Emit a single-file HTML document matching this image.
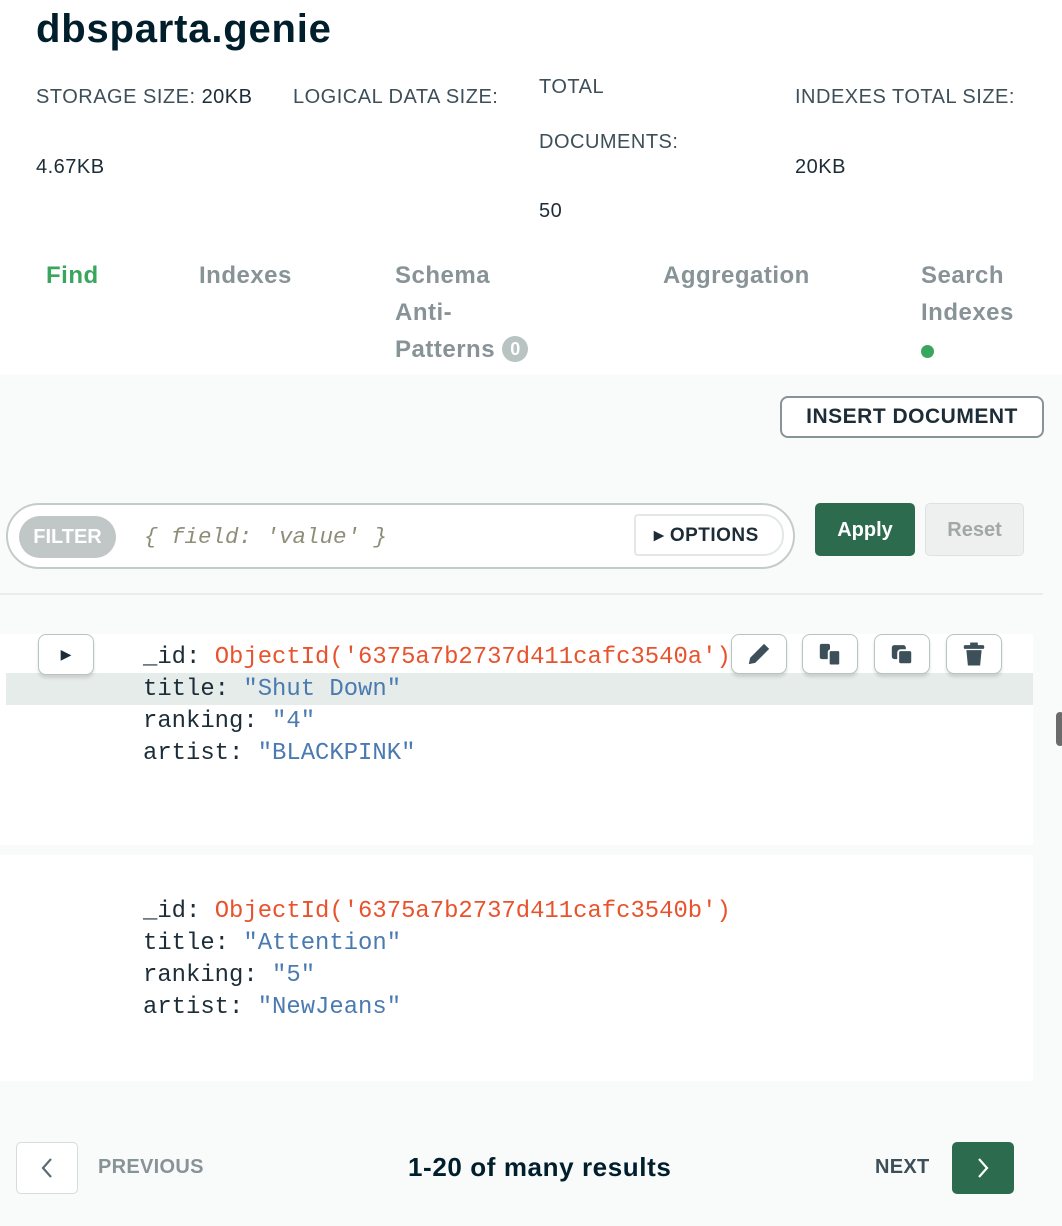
<!DOCTYPE html>
<html><head><style>
*{margin:0;padding:0;box-sizing:border-box}
body{width:1062px;height:1226px;background:#f9fbfa;font-family:"Liberation Sans",sans-serif;position:relative;overflow:hidden}
.a{position:absolute}
.top{left:0;top:0;width:1062px;height:375px;background:#fff}
.st{font-size:20px;color:#3d4f58;letter-spacing:0.5px}
.tab{font-size:24px;font-weight:bold;color:#889397;line-height:37px;letter-spacing:0.5px}
.mono{font-family:"Liberation Mono",monospace;font-size:23.9px;line-height:32px;color:#1c2d38;white-space:pre}
.o{color:#e8532d}.s{color:#4a7ab0}
.ib{width:56px;height:40px;border:1.5px solid #b8c4c2;border-radius:8px;background:#fff;box-shadow:0 3px 3px rgba(0,0,0,.12);display:flex;align-items:center;justify-content:center}
</style></head><body>
<div class="a top"></div>
<div class="a" style="left:36px;top:7px;font-size:40px;font-weight:bold;color:#001e2b;letter-spacing:0.8px">dbsparta.genie</div>
<div class="a st" style="left:36px;top:86px">STORAGE SIZE: <span style="color:#1c2d38">20KB</span></div>
<div class="a st" style="left:293px;top:86px">LOGICAL DATA SIZE:</div>
<div class="a st" style="left:36px;top:156px;color:#1c2d38">4.67KB</div>
<div class="a st" style="left:539px;top:76px">TOTAL</div>
<div class="a st" style="left:539px;top:131px">DOCUMENTS:</div>
<div class="a st" style="left:539px;top:200px;color:#1c2d38">50</div>
<div class="a st" style="left:795px;top:86px">INDEXES TOTAL SIZE:</div>
<div class="a st" style="left:795px;top:156px;color:#1c2d38">20KB</div>
<div class="a tab" style="left:46px;top:257px;color:#3aa55d">Find</div>
<div class="a tab" style="left:199px;top:257px">Indexes</div>
<div class="a tab" style="left:395px;top:257px">Schema<br>Anti-<br>Patterns <span style="display:inline-block;background:#b8c4c2;color:#fff;border-radius:14px;font-size:18px;line-height:26px;padding:0 8px;vertical-align:2px;letter-spacing:0">0</span></div>
<div class="a tab" style="left:663px;top:257px">Aggregation</div>
<div class="a tab" style="left:921px;top:257px">Search<br>Indexes</div>
<div class="a" style="left:921px;top:345px;width:13px;height:13px;border-radius:50%;background:#3aa55d"></div>

<div class="a" style="left:780px;top:396px;width:264px;height:42px;border:2px solid #889397;border-radius:8px;background:#fff;font-size:21px;font-weight:bold;color:#1c2d38;text-align:center;line-height:38px;letter-spacing:0.5px">INSERT DOCUMENT</div>

<div class="a" style="left:6px;top:503px;width:789px;height:66px;border:2px solid #c4ccca;border-radius:33px;background:#fff"></div>
<div class="a" style="left:19px;top:516px;width:97px;height:42px;border-radius:21px;background:#c1c7c6;color:#fff;font-weight:bold;font-size:20px;text-align:center;line-height:42px">FILTER</div>
<div class="a mono" style="left:144px;top:521px;color:#8e8e78;font-style:italic;font-size:22.5px">{ field: 'value' }</div>
<div class="a" style="left:634px;top:514px;width:150px;height:42px;border:2px solid #e3e8e7;border-radius:4px 20px 20px 4px;background:#fff;font-size:19px;font-weight:bold;color:#1c2d38;line-height:40px;padding-left:18px;letter-spacing:0.5px">▸ OPTIONS</div>
<div class="a" style="left:815px;top:503px;width:100px;height:53px;border-radius:5px;background:#2c6b4d;color:#fff;font-size:20px;font-weight:bold;text-align:center;line-height:55px">Apply</div>
<div class="a" style="left:925px;top:503px;width:99px;height:53px;border-radius:5px;background:#eef0ef;border:1.5px solid #dde2e1;color:#a1a8a7;font-size:20px;font-weight:bold;text-align:center;line-height:52px">Reset</div>
<div class="a" style="left:0;top:593px;width:1043px;height:2px;background:#e8ecea"></div>

<div class="a" style="left:0;top:634px;width:1033px;height:211px;background:#fff"></div>
<div class="a" style="left:6px;top:673px;width:1027px;height:32px;background:#e6ecea"></div>
<div class="a ib" style="left:38px;top:634px;width:56px;height:41px;font-size:14px;color:#1c2d38">▶</div>
<div class="a mono" style="left:143px;top:642px"><span>_id: </span><span class="o">ObjectId('6375a7b2737d411cafc3540a')</span>
title: <span class="s">"Shut Down"</span>
ranking: <span class="s">"4"</span>
artist: <span class="s">"BLACKPINK"</span></div>
<div class="a ib" style="left:731px;top:634px"><svg width="28" height="28" viewBox="0 0 22 22"><path d="M3 19l1-5 11-11 4 4-11 11z" fill="#3d4f58"/></svg></div>
<div class="a ib" style="left:802px;top:634px"><svg width="28" height="28" viewBox="0 0 22 22"><rect x="3" y="3" width="8" height="12" rx="1.5" fill="#3d4f58"/><rect x="10" y="8" width="9" height="12" rx="1.5" fill="#3d4f58" stroke="#fff" stroke-width="1.5"/></svg></div>
<div class="a ib" style="left:874px;top:634px"><svg width="28" height="28" viewBox="0 0 22 22"><rect x="3" y="4" width="11" height="11" rx="2" fill="#3d4f58"/><rect x="8" y="8" width="11" height="11" rx="2" fill="#3d4f58" stroke="#fff" stroke-width="1.5"/></svg></div>
<div class="a ib" style="left:946px;top:634px"><svg width="28" height="28" viewBox="0 0 22 22"><rect x="3" y="4" width="16" height="3" rx="1" fill="#3d4f58"/><rect x="8" y="2" width="6" height="3" fill="#3d4f58"/><path d="M5 8h12l-1.2 12H6.2z" fill="#3d4f58"/></svg></div>

<div class="a" style="left:0;top:855px;width:1033px;height:226px;background:#fff"></div>
<div class="a mono" style="left:143px;top:896px"><span>_id: </span><span class="o">ObjectId('6375a7b2737d411cafc3540b')</span>
title: <span class="s">"Attention"</span>
ranking: <span class="s">"5"</span>
artist: <span class="s">"NewJeans"</span></div>

<div class="a" style="left:1056px;top:712px;width:8px;height:34px;border-radius:4px;background:#6b6b6b"></div>

<div class="a" style="left:16px;top:1142px;width:62px;height:52px;border:1.5px solid #d6dcdb;border-radius:5px;background:#fff;display:flex;align-items:center;justify-content:center"><svg width="14" height="24" viewBox="0 0 14 24"><path d="M11 3L3 12l8 9" fill="none" stroke="#5c6c75" stroke-width="2.2"/></svg></div>
<div class="a" style="left:98px;top:1156px;font-size:20px;font-weight:bold;color:#889397;letter-spacing:0.3px">PREVIOUS</div>
<div class="a" style="left:408px;top:1152px;font-size:26px;font-weight:bold;color:#001e2b;letter-spacing:0.6px">1-20 of many results</div>
<div class="a" style="left:875px;top:1156px;font-size:20px;font-weight:bold;color:#3d4f58;letter-spacing:0.3px">NEXT</div>
<div class="a" style="left:952px;top:1142px;width:62px;height:52px;border-radius:5px;background:#2c6b4d;display:flex;align-items:center;justify-content:center"><svg width="14" height="24" viewBox="0 0 14 24"><path d="M3 3l8 9-8 9" fill="none" stroke="#fff" stroke-width="2.2"/></svg></div>
</body></html>
